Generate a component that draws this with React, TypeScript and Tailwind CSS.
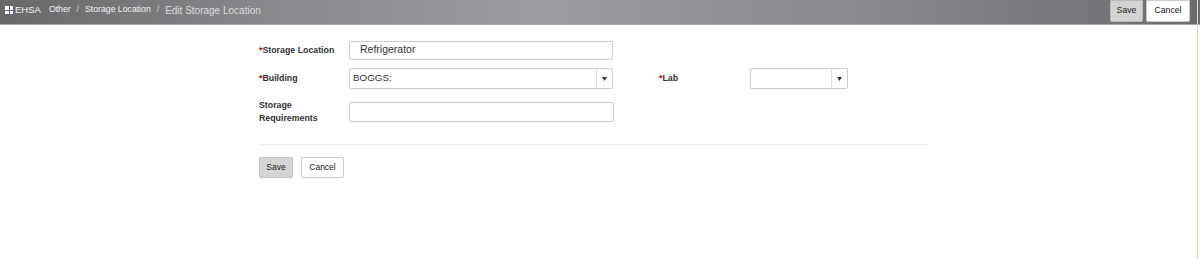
function Caret() {
  return (
    <span className="flex w-[16px] items-center justify-center border-l border-[#ddd]">
      <svg width="5" height="4" viewBox="0 0 5 4">
        <path d="M0 0H5L2.5 4Z" fill="#333" />
      </svg>
    </span>
  );
}

export default function App() {
  return (
    <div className="relative h-[259px] w-[1200px] overflow-hidden bg-white font-['Liberation_Sans',Arial,sans-serif] text-[#333]">
      {/* Top bar */}
      <div className="flex h-[25px] items-start justify-between border-b border-[#a9a9ad] bg-[linear-gradient(90deg,#68686a_0%,#8c8c90_25%,#9c9ca0_45%,#8a8a8f_70%,#6c6c71_100%)]">
        <div className="flex h-[20px] items-center pl-[5px] text-[8.7px] text-[#f2f2f2]">
          <span className="mr-[2px] grid grid-cols-2 gap-[1px]">
            <span className="h-[3.5px] w-[3.5px] bg-white" />
            <span className="h-[3.5px] w-[3.5px] bg-white" />
            <span className="h-[3.5px] w-[3.5px] bg-white" />
            <span className="h-[3.5px] w-[3.5px] bg-white" />
          </span>
          <span className="text-[9.5px]">EHSA</span>
          <span className="ml-[8px]">Other</span>
          <span className="mx-[6px] text-[#d0d0d0]">/</span>
          <span>Storage Location</span>
          <span className="mx-[6px] text-[#d0d0d0]">/</span>
          <span className="text-[10px] text-[#dcdcdc]">Edit Storage Location</span>
        </div>
        <div className="flex gap-[3px] pr-[10px]">
          <button className="h-[22px] w-[33px] rounded-b-[2px] border border-[#b9b9b9] bg-[#d3d3d3] text-[8.7px] text-[#222]">
            Save
          </button>
          <button className="h-[22px] w-[44px] rounded-b-[2px] border border-[#ccc] bg-white text-[8.7px] text-[#222]">
            Cancel
          </button>
        </div>
      </div>
      <div className="absolute right-[2px] top-0 h-full w-[1px] bg-[#c8e6b8]" />

      {/* Form */}
      <div className="ml-[259px] w-[669px] pt-[15px] text-[8.8px]">
        <div className="flex h-[20px] items-center">
          <label className="w-[90px] pt-[2px] font-bold">
            <span className="text-[#c00]">*</span>Storage Location
          </label>
          <div className="flex h-[19px] w-[264px] items-center rounded-[2px] border border-[#ccc] px-[10px] text-[10.5px] text-[#333]">
            Refrigerator
          </div>
        </div>

        <div className="mt-[8px] flex h-[21px] items-center">
          <label className="w-[90px] font-bold">
            <span className="text-[#c00]">*</span>Building
          </label>
          <div className="flex h-[21px] w-[264px] rounded-[2px] border border-[#ccc]">
            <span className="flex flex-1 items-center px-[3px] text-[9.8px]">BOGGS:</span>
            <Caret />
          </div>
          <label className="ml-[46px] w-[91px] font-bold">
            <span className="text-[#c00]">*</span>Lab
          </label>
          <div className="flex h-[21px] w-[98px] rounded-[2px] border border-[#ccc]">
            <span className="flex-1" />
            <Caret />
          </div>
        </div>

        <div className="mt-[10px] flex items-center">
          <label className="w-[90px] font-bold leading-[13px]">
            Storage
            <br />
            Requirements
          </label>
          <div className="h-[20px] w-[265px] rounded-[2px] border border-[#ccc]" />
        </div>

        <div className="mt-[19px] border-t border-[#eee]" />

        <div className="mt-[12px] flex gap-[8px]">
          <button className="h-[21px] w-[34px] rounded-[2px] border border-[#c4c4c4] bg-[#d4d4d4] text-[8.5px] text-[#222]">
            Save
          </button>
          <button className="h-[21px] w-[43px] rounded-[2px] border border-[#ccc] bg-white text-[8.5px] text-[#222]">
            Cancel
          </button>
        </div>
      </div>
    </div>
  );
}
